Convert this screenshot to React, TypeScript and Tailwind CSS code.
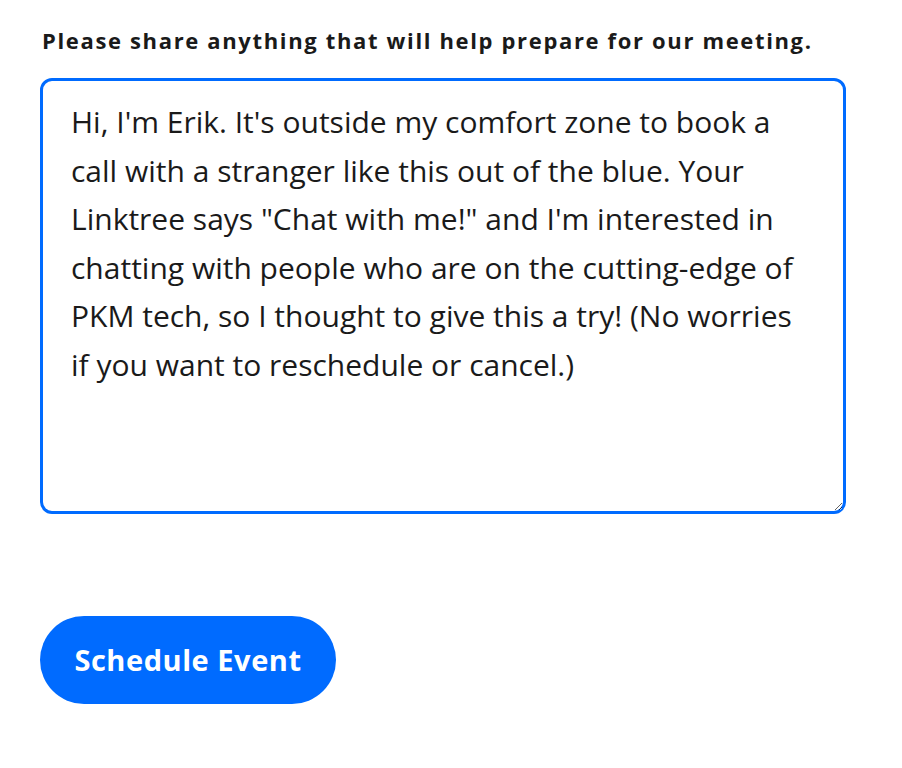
import { useState } from 'react';

const MESSAGE =
  'Hi, I\'m Erik. It\'s outside my comfort zone to book a call with a stranger like this out of the blue. Your Linktree says "Chat with me!" and I\'m interested in chatting with people who are on the cutting-edge of PKM tech, so I thought to give this a try! (No worries if you want to reschedule or cancel.)';

export default function App() {
  const [notes, setNotes] = useState(MESSAGE);

  return (
    <div className="min-h-screen bg-white pl-[40px] pt-[25px] font-['Open_Sans',sans-serif]">
      <label className="block pl-[2px] text-[22px] font-bold leading-[30px] tracking-[1.65px] text-[#1a1a1a]">
        Please share anything that will help prepare for our meeting.
      </label>

      <textarea
        value={notes}
        onChange={(e) => setNotes(e.target.value)}
        className="mt-[23px] block h-[436px] w-[806px] resize-y rounded-[12px] border-[3px] border-[#006bff] pl-[28px] pr-[28px] pt-[17px] text-[30px] leading-[48.5px] text-[#1a1a1a] outline-none"
      />

      <button className="mt-[102px] h-[88px] w-[296px] rounded-full bg-[#006bff] text-[29px] font-bold tracking-[0.55px] text-white">
        Schedule Event
      </button>
    </div>
  );
}
